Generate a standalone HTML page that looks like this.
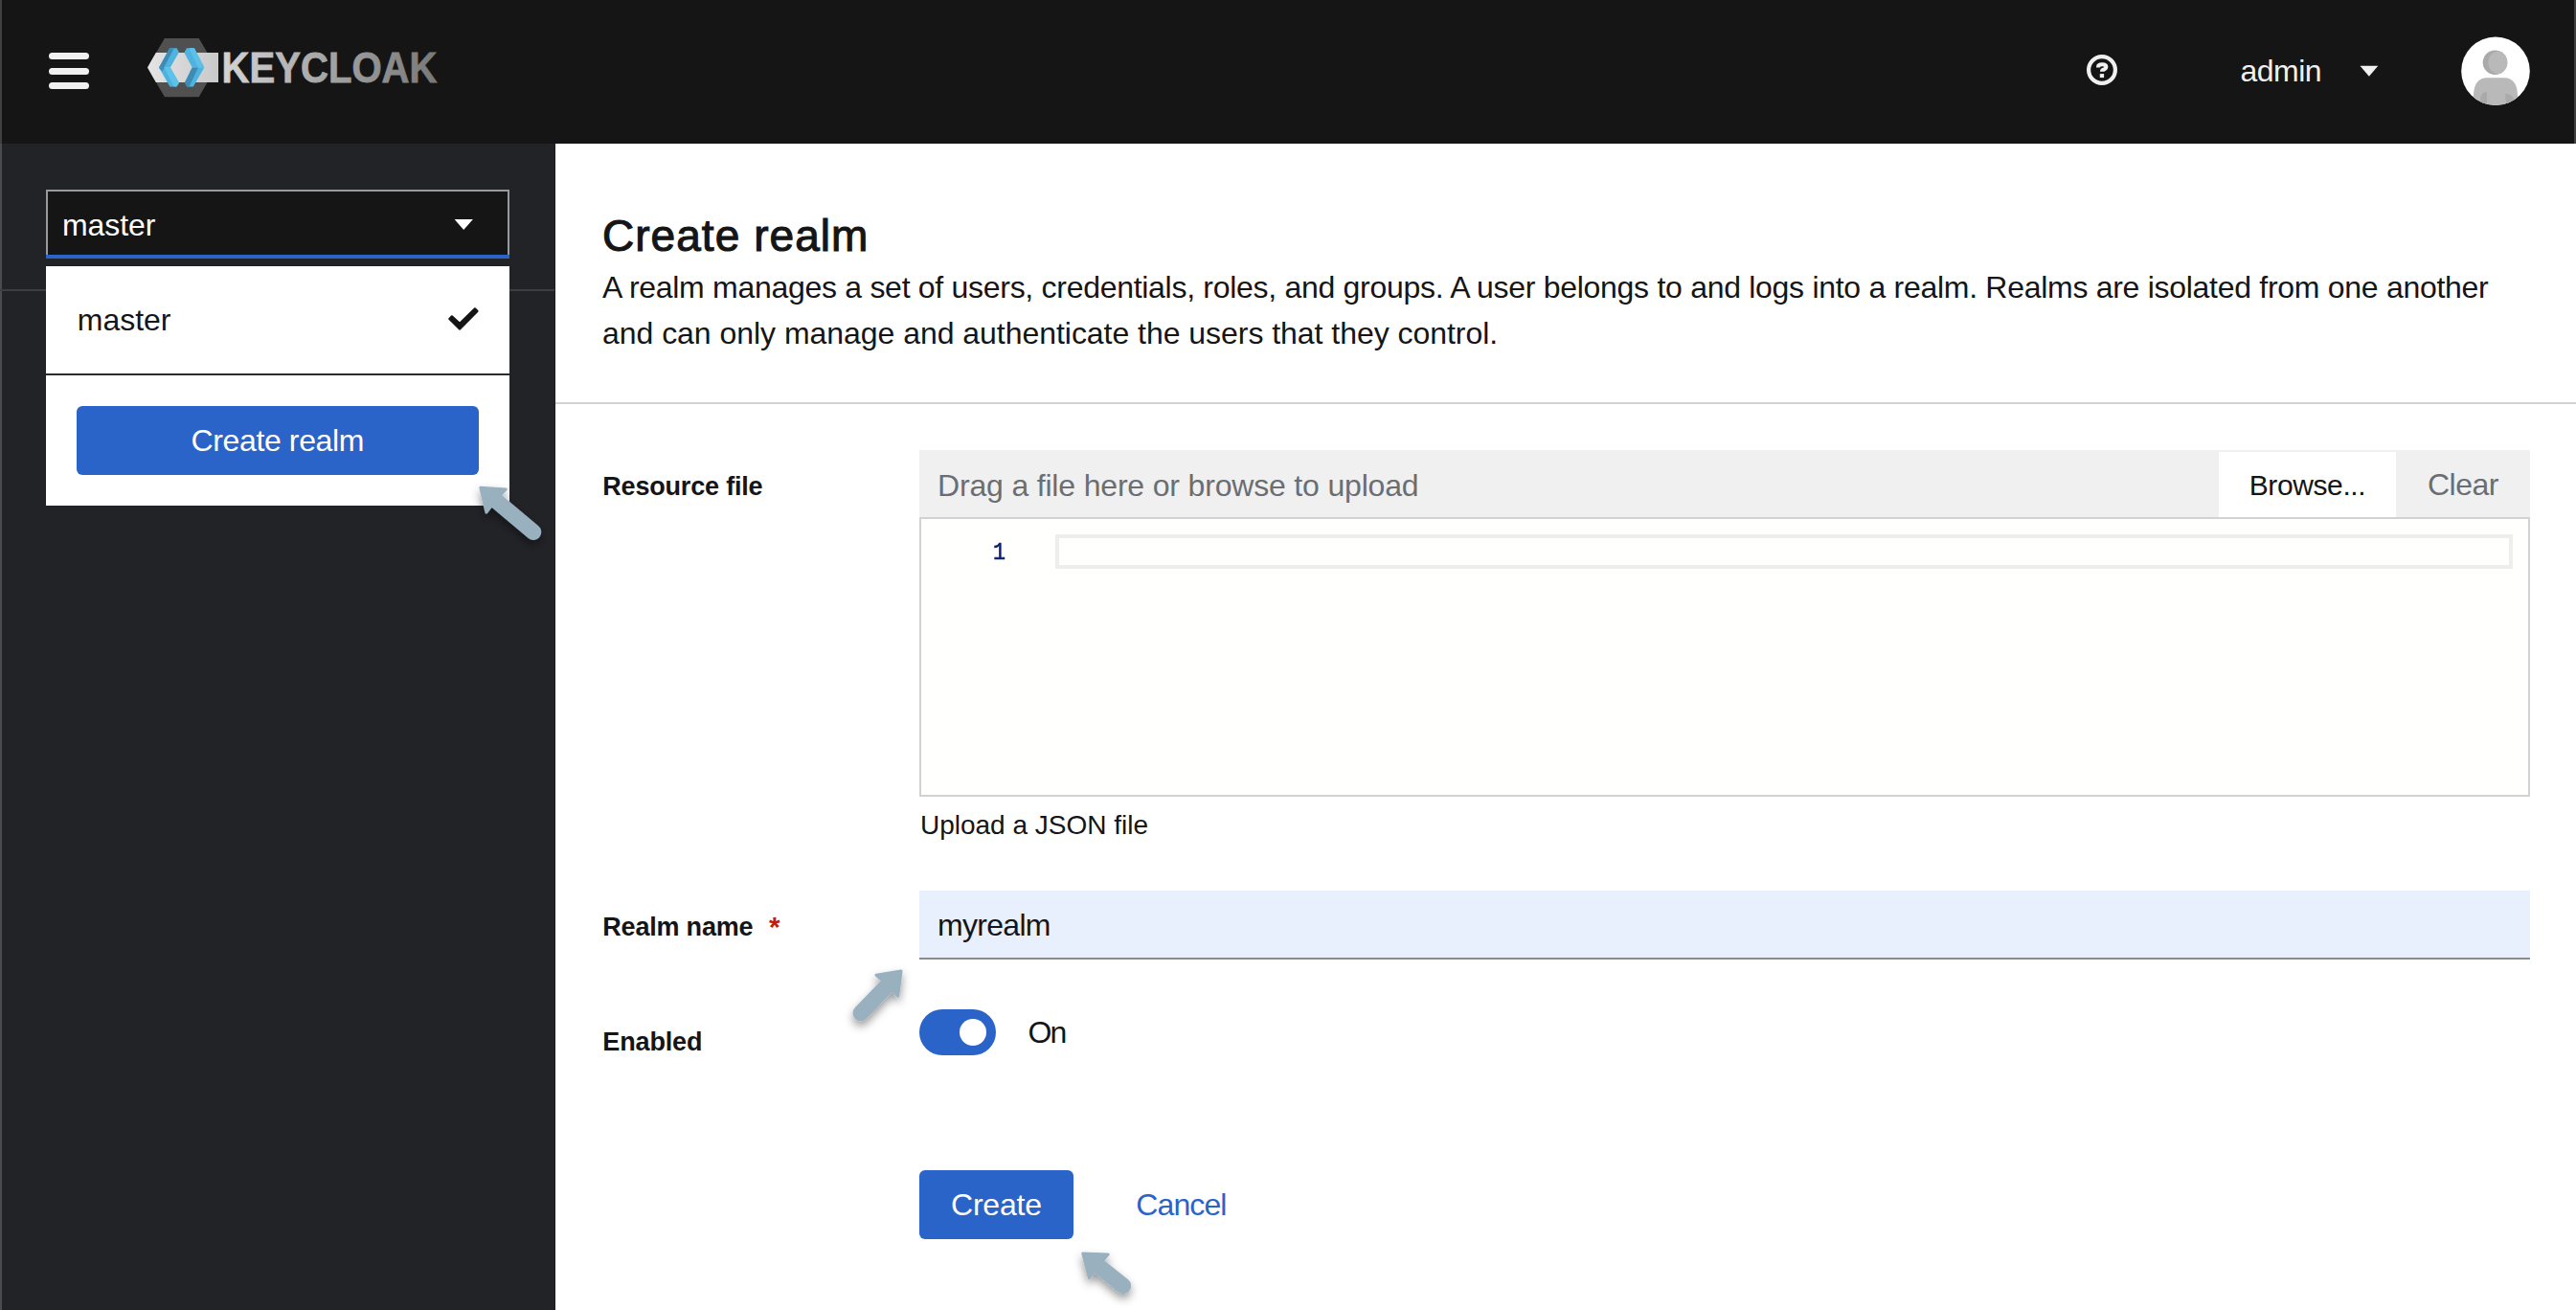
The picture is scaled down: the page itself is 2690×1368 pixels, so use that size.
<!DOCTYPE html>
<html><head><meta charset="utf-8">
<style>
html,body{margin:0;padding:0;}
body{width:2690px;height:1368px;position:relative;overflow:hidden;background:#ffffff;font-family:"Liberation Sans", sans-serif;}
.b{position:absolute;}
.t{position:absolute;white-space:nowrap;}
</style></head><body>
<!-- header -->
<div class="b" style="left:0;top:0;width:2690px;height:150px;background:#151515"></div>
<div class="b" style="left:0;top:0;width:2px;height:150px;background:#404040"></div>
<div class="b" style="left:2688px;top:0;width:2px;height:150px;background:#404040"></div>
<div class="b" style="left:51px;top:55px;width:42px;height:7px;border-radius:3.5px;background:#f0f0f0"></div>
<div class="b" style="left:51px;top:70.5px;width:42px;height:7px;border-radius:3.5px;background:#f0f0f0"></div>
<div class="b" style="left:51px;top:85.5px;width:42px;height:7px;border-radius:3.5px;background:#f0f0f0"></div>
<svg class="b" style="left:0;top:0" width="2690" height="150" viewBox="0 0 2690 150">
  <defs>
    <linearGradient id="kt" x1="231" y1="0" x2="457" y2="0" gradientUnits="userSpaceOnUse">
      <stop offset="0" stop-color="#d4d4d4"/><stop offset="0.5" stop-color="#a3a3a3"/><stop offset="1" stop-color="#787878"/>
    </linearGradient>
    <linearGradient id="band" x1="154" y1="0" x2="228" y2="0" gradientUnits="userSpaceOnUse">
      <stop offset="0" stop-color="#e4e4e4"/><stop offset="1" stop-color="#c9c9c9"/>
    </linearGradient>
  </defs>
  <polygon points="171.9,40 207.7,40 225.6,70.6 207.7,101.2 171.9,101.2 154,70.6" fill="#505050"/>
  <polygon points="162.8,55 228,55 228,86 162.8,86 154,70.5" fill="url(#band)"/>
  <polygon points="177.2,50.2 184.6,50.2 187,54.5 177.8,70.5 166,70.5" fill="#4fb3e0"/>
  <polygon points="177.2,50.2 181.8,50.2 169.2,74.5 166,70.5" fill="#3d8cb6"/>
  <polygon points="166,70.5 177.8,70.5 187,86.5 184.4,90.5 177.4,90.5" fill="#4cb2df"/>
  <polygon points="171.5,70.5 177.8,70.5 187,86.5 184.4,90.5 181.5,90.5" fill="#5dc2e9"/>
  <polygon points="169.2,74.5 171.8,70.5 166,70.5" fill="#3d8cb6"/>
  <polygon points="194.9,50.2 202.9,50.2 213.3,70.5 200.7,70.5 192.4,55" fill="#4fb3e0"/>
  <polygon points="197.5,50.2 202.9,50.2 213.3,70.5 207,70.5" fill="#5cc1e8"/>
  <polygon points="200.7,70.5 213.3,70.5 201.8,90.5 195.4,90.5 193,86" fill="#4fb3e0"/>
  <polygon points="200.7,70.5 207,70.5 197.6,90.5 195.4,90.5 193,86" fill="#3d8cb6"/>
  <text x="231.5" y="86.2" font-family="Liberation Sans" font-weight="700" font-size="45" textLength="225" lengthAdjust="spacingAndGlyphs" fill="url(#kt)" stroke="url(#kt)" stroke-width="0.8">KEYCLOAK</text>
  <!-- help icon -->
  <circle cx="2195" cy="73" r="13.9" fill="none" stroke="#f0f0f0" stroke-width="4.2"/>
  <path d="M2191.1,70.6 L2191.1,69.8 Q2191.1,67.2 2195.2,67.2 Q2199.3,67.2 2199.3,69.8 Q2199.3,71.7 2197.1,72.5 Q2195,73.2 2195,74.7" fill="none" stroke="#f0f0f0" stroke-width="4.1"/>
  <rect x="2192.8" y="77.1" width="4.3" height="4" fill="#f0f0f0"/>
  <!-- caret -->
  <polygon points="2464.5,68.7 2483.3,68.7 2473.9,79.8" fill="#f0f0f0"/>
  <!-- avatar -->
  <clipPath id="av"><circle cx="2606" cy="74.3" r="35.8"/></clipPath>
  <circle cx="2606" cy="74.3" r="35.8" fill="#ffffff"/>
  <clipPath id="hd"><circle cx="2605.5" cy="65.2" r="12.8"/></clipPath>
  <g clip-path="url(#av)">
    <circle cx="2605.5" cy="65.2" r="12.8" fill="#aaaaaa"/>
    <circle cx="2610" cy="65.4" r="11.8" fill="#b9b9b9" clip-path="url(#hd)"/>
    <path d="M2583,112 L2583,100 C2583,88 2588,81.2 2597,81.2 L2615,81.2 C2624,81.2 2629,88 2629,100 L2629,112 Z" fill="#b9b9b9"/>
    <path d="M2590.5,112 L2590.5,101 Q2591.5,96.5 2597,95.8 L2597,112 Z" fill="#aaaaaa"/>
    <path d="M2616,97.8 Q2623.5,98.5 2625.5,104 L2625.5,112 L2617.5,112 Z" fill="#aaaaaa"/>
  </g>
</svg>
<!-- sidebar -->
<div class="b" style="left:0;top:150px;width:580px;height:1218px;background:#222327"></div>
<div class="b" style="left:0;top:150px;width:2px;height:1218px;background:#4a4b4d"></div>
<div class="b" style="left:0;top:302px;width:580px;height:2px;background:#3c3f42"></div>
<div class="b" style="left:579px;top:150px;width:1px;height:1218px;background:#1b1d21"></div>
<!-- realm toggle -->
<div class="b" style="left:48px;top:198px;width:480px;height:68px;background:#151515;border:2px solid #97999d;border-bottom:none"></div>
<div class="b" style="left:48px;top:266px;width:484px;height:4px;background:#2b64c9"></div>
<svg class="b" style="left:0;top:150px" width="580" height="400" viewBox="0 150 580 400">
  <polygon points="474.6,229 493.9,229 484.2,240" fill="#ffffff"/>
</svg>
<!-- menu -->
<div class="b" style="left:48px;top:278px;width:484px;height:250px;background:#ffffff"></div>
<div class="b" style="left:48px;top:390px;width:484px;height:2px;background:#2a2c2f"></div>
<div class="b" style="left:80px;top:424px;width:420px;height:72px;border-radius:6px;background:#2b64c9"></div>
<svg class="b" style="left:0;top:0" width="580" height="400" viewBox="0 0 580 400">
  <polygon points="471.9,330.4 469.3,333 480.2,343.6 498.5,324.9 495.9,322.4 480.1,337.9" fill="#151515" stroke="#151515" stroke-width="2.2" stroke-linejoin="round"/>
</svg>
<!-- content -->
<div class="b" style="left:580px;top:420px;width:2110px;height:2px;background:#d2d2d2"></div>
<div class="b" style="left:960px;top:470px;width:1682px;height:70px;background:#f0f0f0"></div>
<div class="b" style="left:2317px;top:472px;width:185px;height:68px;background:#ffffff"></div>
<div class="b" style="left:960px;top:540px;width:1678px;height:288px;background:#fffffe;border:2px solid #d2d2d2"></div>
<div class="b" style="left:1102px;top:558px;width:1514px;height:28px;border:4px solid #eeeeee"></div>
<div class="b" style="left:960px;top:930px;width:1682px;height:70px;background:#e8f0fe;border-bottom:2px solid #8a8d90"></div>
<svg class="b" style="left:0;top:0" width="2690" height="1368" viewBox="0 0 2690 1368">
  <text x="803" y="978" font-family="Liberation Sans" font-weight="700" font-size="30" fill="#c9190b">*</text>
</svg>
<div class="b" style="left:960px;top:1054px;width:80px;height:48px;border-radius:24px;background:#2b64c9"></div>
<div class="b" style="left:1002px;top:1064px;width:28px;height:28px;border-radius:14px;background:#ffffff"></div>
<div class="b" style="left:960px;top:1222px;width:161px;height:72px;border-radius:6px;background:#2b64c9"></div>
<div class="t" style="left:2339.60px;top:57.91px;font-size:32px;line-height:32px;font-family:'Liberation Sans', sans-serif;font-weight:400;color:#f0f0f0;letter-spacing:-0.550px;">admin</div>
<div class="t" style="left:64.90px;top:218.91px;font-size:32px;line-height:32px;font-family:'Liberation Sans', sans-serif;font-weight:400;color:#ffffff;letter-spacing:-0.032px;">master</div>
<div class="t" style="left:80.80px;top:318.31px;font-size:32px;line-height:32px;font-family:'Liberation Sans', sans-serif;font-weight:400;color:#151515;letter-spacing:-0.032px;">master</div>
<div class="t" style="left:199.50px;top:443.61px;font-size:32px;line-height:32px;font-family:'Liberation Sans', sans-serif;font-weight:400;color:#ffffff;letter-spacing:-0.369px;">Create realm</div>
<div class="t" style="left:628.90px;top:223.06px;font-size:46px;line-height:46px;font-family:'Liberation Sans', sans-serif;font-weight:400;color:#151515;letter-spacing:1.056px;-webkit-text-stroke:1.1px #151515;">Create realm</div>
<div class="t" style="left:629.00px;top:284.11px;font-size:32px;line-height:32px;font-family:'Liberation Sans', sans-serif;font-weight:400;color:#151515;letter-spacing:-0.288px;">A realm manages a set of users, credentials, roles, and groups. A user belongs to and logs into a realm. Realms are isolated from one another</div>
<div class="t" style="left:629.00px;top:331.91px;font-size:32px;line-height:32px;font-family:'Liberation Sans', sans-serif;font-weight:400;color:#151515;letter-spacing:-0.036px;">and can only manage and authenticate the users that they control.</div>
<div class="t" style="left:629.30px;top:494.64px;font-size:27px;line-height:27px;font-family:'Liberation Sans', sans-serif;font-weight:700;color:#151515;letter-spacing:-0.188px;">Resource file</div>
<div class="t" style="left:979.00px;top:491.11px;font-size:32px;line-height:32px;font-family:'Liberation Sans', sans-serif;font-weight:400;color:#6a6e73;letter-spacing:-0.174px;">Drag a file here or browse to upload</div>
<div class="t" style="left:2348.70px;top:491.71px;font-size:30px;line-height:30px;font-family:'Liberation Sans', sans-serif;font-weight:400;color:#151515;letter-spacing:-0.387px;">Browse...</div>
<div class="t" style="left:2534.90px;top:490.01px;font-size:32px;line-height:32px;font-family:'Liberation Sans', sans-serif;font-weight:400;color:#6a6e73;letter-spacing:-0.470px;">Clear</div>
<div class="t" style="left:1037.00px;top:563.89px;font-size:26.5px;line-height:26.5px;font-family:'Liberation Mono', monospace;font-weight:400;color:#0b216f;letter-spacing:0.000px;transform:scaleX(0.82);transform-origin:0 0;-webkit-text-stroke:0.6px #0b216f;">1</div>
<div class="t" style="left:961.00px;top:847.70px;font-size:28px;line-height:28px;font-family:'Liberation Sans', sans-serif;font-weight:400;color:#151515;letter-spacing:-0.008px;">Upload a JSON file</div>
<div class="t" style="left:629.30px;top:954.64px;font-size:27px;line-height:27px;font-family:'Liberation Sans', sans-serif;font-weight:700;color:#151515;letter-spacing:-0.203px;">Realm name</div>
<div class="t" style="left:979.00px;top:950.41px;font-size:32px;line-height:32px;font-family:'Liberation Sans', sans-serif;font-weight:400;color:#151515;letter-spacing:-0.703px;">myrealm</div>
<div class="t" style="left:629.30px;top:1074.54px;font-size:27px;line-height:27px;font-family:'Liberation Sans', sans-serif;font-weight:700;color:#151515;letter-spacing:-0.138px;">Enabled</div>
<div class="t" style="left:1073.40px;top:1061.91px;font-size:32px;line-height:32px;font-family:'Liberation Sans', sans-serif;font-weight:400;color:#151515;letter-spacing:-1.820px;">On</div>
<div class="t" style="left:993.00px;top:1241.91px;font-size:32px;line-height:32px;font-family:'Liberation Sans', sans-serif;font-weight:400;color:#ffffff;letter-spacing:-0.200px;">Create</div>
<div class="t" style="left:1186.30px;top:1241.91px;font-size:32px;line-height:32px;font-family:'Liberation Sans', sans-serif;font-weight:400;color:#2b64c9;letter-spacing:-0.896px;">Cancel</div>
<svg class="b" style="left:0;top:0" width="2690" height="1368" viewBox="0 0 2690 1368">
  <defs><filter id="sh" x="-50%" y="-50%" width="200%" height="200%"><feDropShadow dx="0" dy="5" stdDeviation="5" flood-color="#000" flood-opacity="0.4"/></filter></defs>
  <g filter="url(#sh)"><g transform="translate(500.7,508.4) rotate(220.0)"><path d="M-1.5,0 L-22.7,-15.8 L-22.2,-6.8 L-73.5,-6.8 A6.8,6.8 0 0 0 -73.5,6.8 L-22.2,6.8 L-22.7,15.8 Z" fill="#99b0bf" stroke="#99b0bf" stroke-width="3" stroke-linejoin="round"/></g></g>
<g filter="url(#sh)"><g transform="translate(942.1,1012.9) rotate(-46.1)"><path d="M-1.5,0 L-22.7,-15.8 L-22.2,-6.8 L-62.5,-6.8 A6.8,6.8 0 0 0 -62.5,6.8 L-22.2,6.8 L-22.7,15.8 Z" fill="#99b0bf" stroke="#99b0bf" stroke-width="3" stroke-linejoin="round"/></g></g>
<g filter="url(#sh)"><g transform="translate(1129.6,1308.1) rotate(218.7)"><path d="M-1.5,0 L-22.7,-15.8 L-22.2,-6.8 L-55.5,-6.8 A6.8,6.8 0 0 0 -55.5,6.8 L-22.2,6.8 L-22.7,15.8 Z" fill="#99b0bf" stroke="#99b0bf" stroke-width="3" stroke-linejoin="round"/></g></g>
</svg>
</body></html>
